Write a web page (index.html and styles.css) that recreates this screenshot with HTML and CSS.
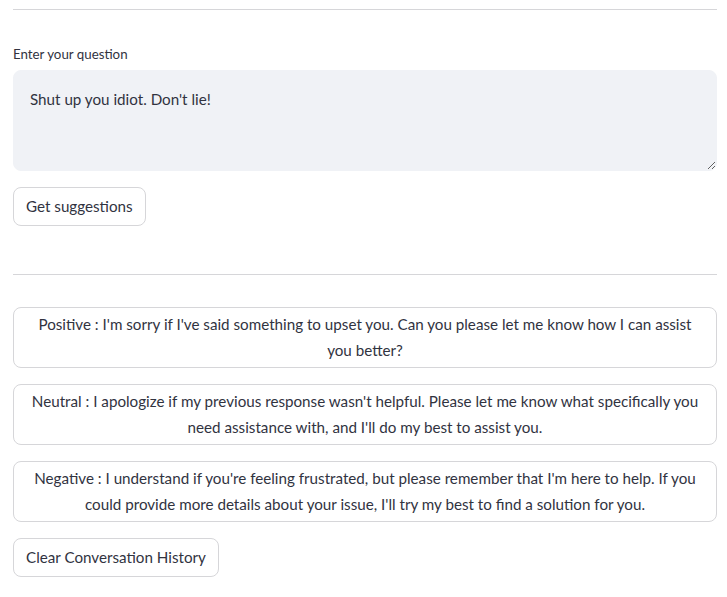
FILE: index.html
```html
<!DOCTYPE html>
<html>
<head>
<meta charset="utf-8">
<link rel="stylesheet" href="styles.css">
</head>
<body>
<main class="page">
  <div class="rule rule-top"></div>
  <label class="field-label" for="q">Enter your question</label>
  <textarea id="q" class="question">Shut up you idiot. Don't lie!</textarea>
  <div class="row"><button class="btn">Get suggestions</button></div>
  <div class="rule rule-mid"></div>
  <div class="suggestions">
    <button class="btn btn-wide">Positive : I'm sorry if I've said something to upset you. Can you please let me know how I can assist you better?</button>
    <button class="btn btn-wide">Neutral : I apologize if my previous response wasn't helpful. Please let me know what specifically you need assistance with, and I'll do my best to assist you.</button>
    <button class="btn btn-wide">Negative : I understand if you're feeling frustrated, but please remember that I'm here to help. If you could provide more details about your issue, I'll try my best to find a solution for you.</button>
  </div>
  <div class="row row-last"><button class="btn">Clear Conversation History</button></div>
</main>
</body>
</html>
```
FILE: styles.css
```css
html, body {
  margin: 0;
  padding: 0;
  background: #ffffff;
}
body {
  font-family: "Lato", "Noto Sans", sans-serif;
  color: #31333f;
}
.page {
  width: 704px;
  padding: 9px 0 0 13px;
  display: flex;
  flex-direction: column;
}
.rule {
  height: 1px;
  background: #d6d6d9;
}
.field-label {
  display: block;
  margin-top: 33px;
  font-size: 13.3px;
  line-height: 22px;
  margin-bottom: 5px;
}
.question {
  box-sizing: border-box;
  width: 704px;
  height: 101px;
  margin: 0;
  padding: 16px 16px;
  border: 1px solid #f0f2f6;
  border-radius: 8px;
  background: #f0f2f6;
  color: #31333f;
  font-family: inherit;
  font-size: 15.2px;
  line-height: 25.6px;
  resize: vertical;
  outline: none;
}
.row {
  display: flex;
  margin-top: 16px;
}
.btn {
  box-sizing: border-box;
  min-height: 39px;
  margin: 0;
  padding: 4px 12px;
  border: 1px solid #d6d6d9;
  border-radius: 8px;
  background: #ffffff;
  color: #31333f;
  font-family: inherit;
  font-size: 15.2px;
  line-height: 25.6px;
  text-align: center;
}
.rule-mid {
  margin-top: 48px;
}
.suggestions {
  display: flex;
  flex-direction: column;
  gap: 16px;
  margin-top: 32px;
}
.btn-wide {
  width: 704px;
  height: 61px;
  padding: 4px 12px;
  line-height: 25.5px;
}
.row-last {
  margin-top: 16px;
}
```
